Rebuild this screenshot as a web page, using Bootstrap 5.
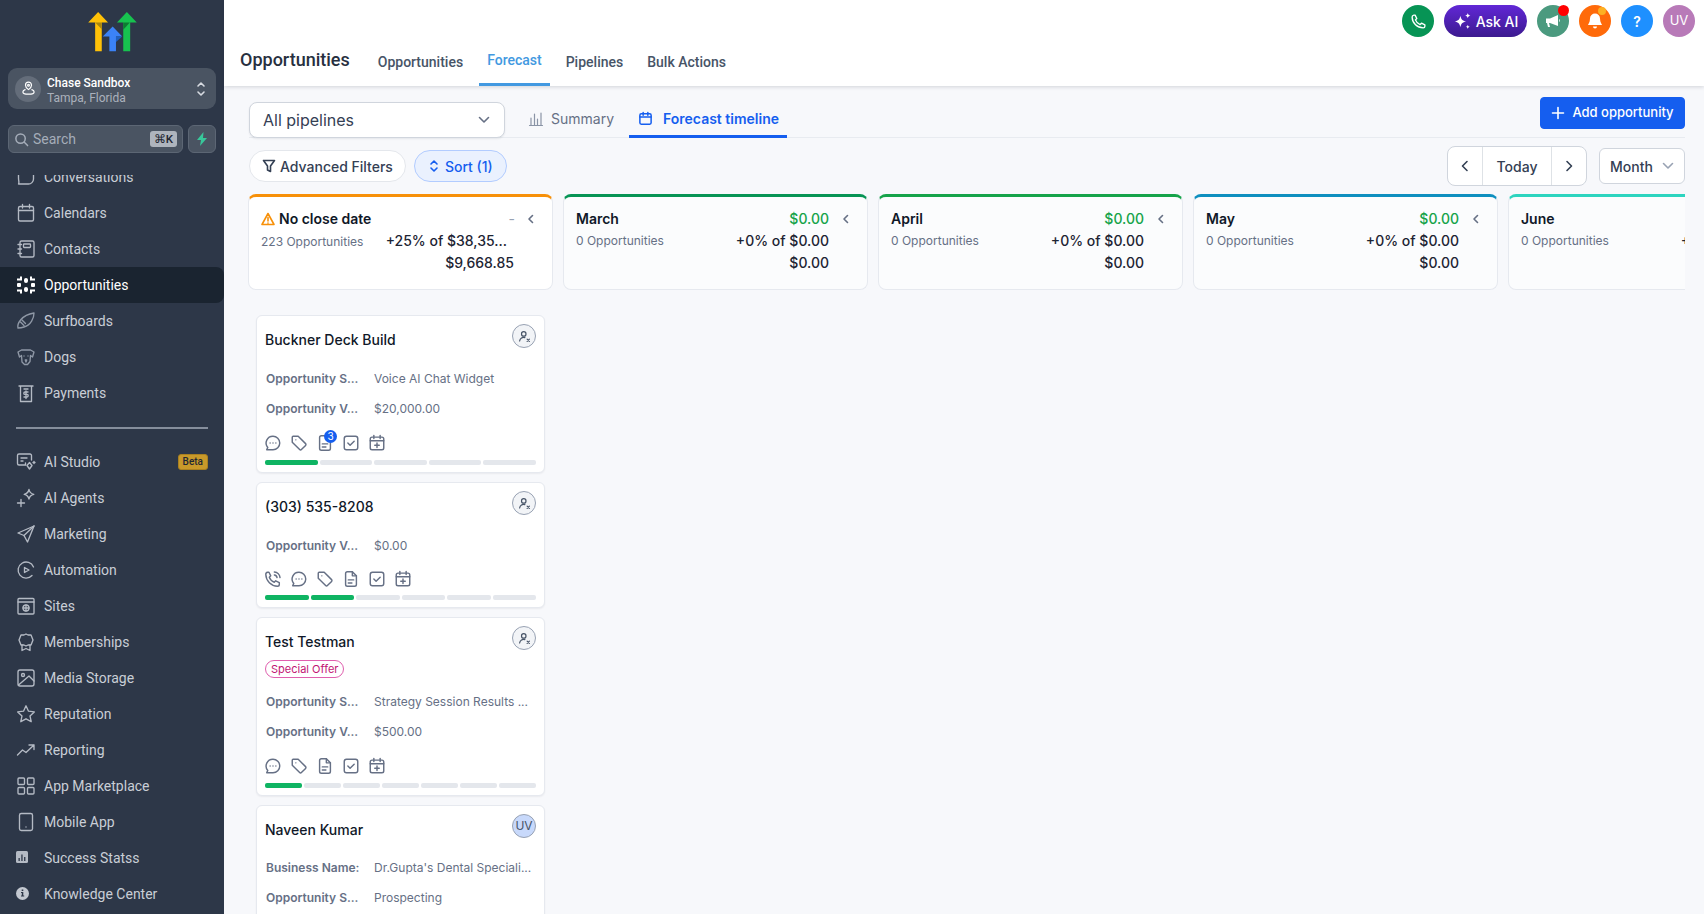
<!DOCTYPE html>
<html lang="en"><head><meta charset="utf-8"><title>Opportunities</title>
<link href="https://cdn.jsdelivr.net/npm/bootstrap@5.3.0/dist/css/bootstrap.min.css" rel="stylesheet">
<style>
html,body{height:100%;overflow:hidden}
body{font-family:Inter,"Liberation Sans",sans-serif;background:#f7f8fb;color:#101828;font-size:14px}
svg{flex:none;display:block}
.ico{fill:none;stroke:currentColor;stroke-width:1.6;stroke-linecap:round;stroke-linejoin:round}
.shell{height:914px}
.side{width:224px;background:#2d3748;font-family:Roboto,sans-serif;color:#c9ced6;flex:none}
.logo-box{height:68px;padding-top:12px;padding-left:88px}
.loc{margin:0 8px;height:41px;background:#4a5462;border-radius:9px;padding:0 10px 0 7px;gap:6px}
.loc-av{width:26px;height:26px;border-radius:50%;background:#646d7a;color:#fff}
.loc-t{padding-top:4px}
.loc-a{font-size:12px;font-weight:500;color:#fff;line-height:15px}
.loc-b{font-size:12px;color:#aab1bc;line-height:15px}
.srch{margin:16px 8px 22px;gap:5px;height:28px}
.srch-in{flex:1;background:#4a5462;border:1px solid #5c6674;border-radius:6px;padding:0 5px;color:#a5adb9;gap:4px}
.kbd-k{background:#aeb4bd;color:#1f2733;font-size:11.5px;font-weight:500;border-radius:3px;width:27px;height:16px;line-height:16px;text-align:center}
.bolt{width:28px;background:#4a5462;border:1px solid #5c6674;border-radius:6px}
.snav{flex:1;overflow:hidden;min-height:0}
.snav-in{margin-top:-16px}
.sitem{height:36px;padding:0 16px 0 16px;gap:8px;font-size:14px;white-space:nowrap}
.sitem svg{width:20px;height:20px;color:#b4bac4}
.sitem .ico{stroke-width:1.35}
.sitem.on{background:#1a2430;border-radius:0 8px 8px 0;color:#fff}
.sitem.on svg{color:#fff}
.sdiv{height:2px;background:#858e9c;margin:16px 16px 15px}
.beta{margin-left:auto;background:#c8992a;color:#1f2733;font-size:10px;font-weight:500;border-radius:3px;padding:0 4px;height:16px;line-height:14px;border:1px solid #a98020}
.main{min-width:0}
.head{height:86px;background:#fff;box-shadow:0 1px 4px rgba(16,24,40,.16);position:relative;font-family:Roboto,sans-serif;flex:none}
.topbar{height:42px;padding:5px 9px 0 0;gap:10px;justify-content:flex-end}
.rnd{width:32px;height:32px;border-radius:50%;color:#fff;position:relative;font-size:14px}
.dotx{position:absolute;border-radius:50%}
.askai{width:83px;height:32px;border-radius:16px;background:linear-gradient(#6127d6,#3c1a8f);color:#fff;font-family:Inter,sans-serif;font-size:14px;font-weight:500;gap:4px}
.tabsrow{height:44px;padding-left:16px}
.ttl{font-size:18px;font-weight:500;color:#27303f;margin-right:16px;padding-bottom:10px}
.htab{height:44px;color:#475467;font-weight:500;font-size:14px;margin:0 4px;display:flex;align-items:center;padding:7px 8px 8px;border-bottom:3px solid transparent}
.htab.on{color:#4299e1;border-bottom-color:#4299e1;padding:7px 8px 12px}
.body-w{padding:0 19px 0 25px;min-height:0}
.r1{height:52px;border-bottom:1px solid #e8ebf0;align-items:flex-end;flex:none}
.sel{width:256px;height:36px;background:#fff;border:1px solid #d0d5dd;border-radius:8px;font-size:16px;color:#344054;padding:0 14px 0 13px;box-shadow:0 1px 2px rgba(16,24,40,.08);margin-bottom:-1px}
.subtab{height:36px;padding:0 7px;color:#667085;gap:7px;margin-bottom:-1px;border-bottom:3px solid transparent}
.subtab.on{color:#155eef;font-weight:600;border-bottom-color:#155eef;padding:0 8px 0 9px;gap:10px;margin-left:8px}
.addb{width:145px;height:32px;background:#155eef;border-color:#155eef;color:#fff;font-size:13px;font-weight:500;border-radius:4px;padding:0;gap:7px;margin-bottom:8px}
.r2{height:56px;padding-top:8px;flex:none}
.pil{height:32px;border-radius:16px;background:#fff;border:1px solid #e4e7ec;color:#344054;font-size:14px;font-weight:500;gap:4px;padding:0 12px;margin-top:4px}
.pil.blu{background:#eaf1fe;border-color:#b2ccff;color:#155eef;margin-left:8px;gap:5px;padding:0 13px}
.tgrp{height:40px;width:140px;background:#fff;border:1px solid #d0d5dd;border-radius:8px;color:#344054}
.tgrp>div{height:100%}
.mth{width:86px;height:36px;background:#fff;border:1px solid #d0d5dd;border-radius:6px;color:#344054;font-weight:500;margin:2px 0 0 12px;gap:9px}
.cols{gap:10px;overflow:hidden;height:96px;flex:none;margin-left:-1px}
.colc{flex:0 0 305px;background:#fff;border:1px solid #e6e9ef;border-top:3px solid;border-radius:8px;padding:13px 16px 0 12px;position:relative}
.colc.dim{background:#fbfcfd}
.cname{font-weight:600;color:#101828;line-height:18px}
.cgreen{color:#16a34a;font-weight:500;line-height:18px}
.csub{font-size:12px;color:#667085}
.camt{font-weight:500;line-height:22px;color:#1d2433;white-space:nowrap}
.cchev{color:#667085;margin:0 1px 0 13px}
.camtrow{margin-top:2px;padding-right:22px}
.camtlast{padding-right:22px}
.lst{width:289px;margin:25px 0 0 7px;gap:9px;flex:none}
.opc{background:#fff;border:1px solid #e6e9ef;border-radius:6px;box-shadow:0 1px 2px rgba(16,24,40,.06);padding:7px 8px 0;flex:none}
.oh{height:32px;position:relative;padding-top:8px}
.ot{font-size:14px;font-weight:500;color:#101828;line-height:18px}
.oav{width:24px;height:24px;border-radius:50%;background:#f2f4f7;border:1px solid #98a2b3;color:#475467;position:absolute;right:0;top:1px;font-size:12px}
.oav.usr{background:#c8d9fb}
.orow{height:30px;font-size:12px;color:#667085;white-space:nowrap}
.ol{width:109px;font-weight:600;padding-left:1px;color:#667085}
.oicons{height:26px;gap:8px;color:#667085;margin:6px 0 0 -1px}
.oicons svg{width:18px;height:18px}
.nb{position:absolute;top:-4px;left:8px;width:13px;height:13px;border-radius:50%;background:#155eef;color:#fff;font-size:10px;line-height:13px;text-align:center}
.bars{gap:2px;height:5px;margin:4px 0 7px}
.bars i{flex:1;background:#e4e7ec;border-radius:2px;display:block}
.bars i.g{background:#0fb463}
.spc{display:inline-block;height:18px;line-height:16px;border:1px solid #e05fae;color:#c11574;font-size:11px;border-radius:9px;padding:0 5px}
.tailpad{height:40px}
</style></head>
<body>
<svg width="0" height="0" style="position:absolute">
<defs>
<symbol id="i-chat" viewBox="0 0 20 20"><path d="M10 2.500a7.500 7.500 0 0 1 0 15H3l1.200-2.600A7.500 7.500 0 0 1 10 2.500z"/><path d="M6.800 10h.01M10 10h.01M13.200 10h.01"/></symbol>
<symbol id="i-tag" viewBox="0 0 20 20"><path d="M2.500 3.500a1 1 0 0 1 1-1h5.600l8.200 8.200a1.400 1.400 0 0 1 0 2l-4.600 4.600a1.400 1.400 0 0 1-2 0L2.500 9.100z"/><path d="M6.500 6.500h.01"/></symbol>
<symbol id="i-doc" viewBox="0 0 20 20"><path d="M11.500 2H6a2 2 0 0 0-2 2v12a2 2 0 0 0 2 2h8a2 2 0 0 0 2-2V6.500z"/><path d="M11.500 2v4.500H16M7 11h6M7 14.500h4"/></symbol>
<symbol id="i-chk" viewBox="0 0 20 20"><rect x="2.500" y="2.500" width="15" height="15" rx="2.500"/><path d="M6.500 10l2.500 2.500 4.500-4.500"/></symbol>
<symbol id="i-cal" viewBox="0 0 20 20"><rect x="2.500" y="3.500" width="15" height="14" rx="2"/><path d="M2.500 7.500h15M6.500 1.500v3.500M13.500 1.500v3.500M10 10v5M7.500 12.500h5"/></symbol>
<symbol id="i-call" viewBox="0 0 20 20"><path d="M5.500 2.500l2 4-1.600 1.600a9 9 0 0 0 5.500 5.500l1.600-1.600 4 2v2a2 2 0 0 1-2 2A13.500 13.500 0 0 1 2 5a2.400 2.400 0 0 1 2-2.500z"/><path d="M11.500 5.500a3.500 3.500 0 0 1 3 3M11.500 2.200a6.800 6.800 0 0 1 6.300 6.300"/></symbol>
<symbol id="i-nouser" viewBox="0 0 20 20"><circle cx="9" cy="6.500" r="3"/><path d="M3.500 16a5.500 5.500 0 0 1 7-4.500M13.500 13.500l3 3M16.500 13.500l-3 3"/></symbol>
</defs></svg>
<div class="d-flex shell">
<aside class="side d-flex flex-column">
  <div class="logo-box">
    <svg width="49" height="40" viewBox="263 36 147 121"><path fill="#ffc107" d="M284 155V68h-21l30-32 30 32h-19v87z"/><path fill="#a8860f" d="M284 68h20l0 20z"/><path fill="#3b82f6" d="M327 155v-45h-20l30-30 29 30h-19v45z"/><path fill="#1e5fc0" d="M347 110h19l-19 17z"/><path fill="#17c24f" d="M369 155V68h-19l30-32 30 32h-20v87z"/><path fill="#0e7a32" d="M369 68h20l-20 22z"/></svg>
  </div>
  <div class="loc d-flex align-items-center">
    <div class="loc-av d-flex align-items-center justify-content-center"><svg class="ico" width="15" height="15" viewBox="0 0 20 20"><path d="M10 11.500s4-3 4-6a4 4 0 0 0-8 0c0 3 4 6 4 6z"/><circle cx="10" cy="5.500" r="1.200"/><path d="M5.500 11.500C3.500 12.300 2.500 13.300 2.500 14.500c0 2 3.400 3 7.500 3s7.500-1 7.500-3c0-1.200-1-2.200-3-3"/></svg></div>
    <div class="loc-t flex-grow-1"><div class="loc-a">Chase Sandbox</div><div class="loc-b">Tampa, Florida</div></div>
    <svg class="ico" width="10" height="18" viewBox="0 0 10 18" style="color:#d7dbe1"><path d="M2 6l3-3 3 3M2 12l3 3 3-3"/></svg>
  </div>
  <div class="srch d-flex">
    <div class="srch-in d-flex align-items-center">
      <svg class="ico" width="15" height="15" viewBox="0 0 16 16"><circle cx="7" cy="7" r="5"/><path d="M11 11l3.500 3.500"/></svg>
      <span class="flex-grow-1">Search</span><span class="kbd-k">⌘K</span>
    </div>
    <div class="bolt d-flex align-items-center justify-content-center"><svg width="12" height="14" viewBox="0 0 12 14"><path fill="#38c79a" d="M7.500 0L1 8h4l-1 6 7-8H7z"/></svg></div>
  </div>
  <nav class="snav"><div class="snav-in">
    <div class="sitem d-flex align-items-center"><svg class="ico" viewBox="0 0 20 20"><path d="M2.500 3v8c0 3 1 4.500 0 6h10c2.500 0 5-2 5-5V3"/></svg>Conversations</div>
    <div class="sitem d-flex align-items-center"><svg class="ico" viewBox="0 0 20 20"><rect x="2.500" y="3.500" width="15" height="14.500" rx="1.500"/><path d="M2.500 7.500h15M6.500 1.500v3.500M13.500 1.500v3.500"/></svg>Calendars</div>
    <div class="sitem d-flex align-items-center"><svg class="ico" viewBox="0 0 20 20"><rect x="4" y="2" width="14" height="16" rx="1.500"/><rect x="7.500" y="5" width="7" height="3.500" rx=".8"/><path d="M2 5.500h3.500M2 10h3.500M2 14.500h3.500"/></svg>Contacts</div>
    <div class="sitem on d-flex align-items-center"><svg viewBox="0 0 20 20" fill="#fff"><path d="M1 3.500h3v-2h2v4H1zM14 1.500h2v2h3v2h-5zM1 14.500h5v4H4v-2H1zM14 14.500h5v2h-3v2h-2z"/><rect x="8" y="3" width="4" height="5" rx="2"/><rect x="8" y="12" width="4" height="5" rx="2"/><rect x="1" y="8" width="4" height="4" rx="1"/><rect x="15" y="8" width="4" height="4" rx="1"/></svg>Opportunities</div>
    <div class="sitem d-flex align-items-center"><svg class="ico" viewBox="0 0 20 20" style="color:#8f98a6"><path d="M2 17c-1-4 3-13 16-15 0 5-3 12-10 14-3 1-5 1-6 1z"/><path d="M6 9l3.500 3.500M4.500 11l3.500 3.500"/></svg>Surfboards</div>
    <div class="sitem d-flex align-items-center"><svg class="ico" viewBox="0 0 20 20" style="color:#8f98a6"><path d="M5.500 3h9l3.500 2-1.500 5-2-1.500-.5 6-2.500 3h-3L6 15l-.5-6.500L3.500 10 2 5z"/><path d="M8 9h.01M12 9h.01M9.300 13h1.400l-.7 2z"/></svg>Dogs</div>
    <div class="sitem d-flex align-items-center"><svg class="ico" viewBox="0 0 20 20"><path d="M3 3h14M4.500 3v15.500h11V3M8 6h4"/><path d="M12 9H9c-.8 0-1.200.6-1.200 1.200s.4 1.200 1.200 1.200h2c.8 0 1.200.6 1.200 1.200S11.800 14 11 14H8M10 8v7.500"/></svg>Payments</div>
    <div class="sdiv"></div>
    <div class="sitem d-flex align-items-center"><svg class="ico" viewBox="0 0 20 20"><path d="M9 13H3a1.500 1.500 0 0 1-1.500-1.500v-8A1.500 1.500 0 0 1 3 2h11a1.500 1.500 0 0 1 1.500 1.500V8M5 6h6M5 9h2"/><path d="M13.500 10.500l2.500 3-2.500 3.500-2.500-3.500zM18 9.500v2M17 10.500h2M9.500 11v2"/></svg><span>AI Studio</span><span class="beta">Beta</span></div>
    <div class="sitem d-flex align-items-center"><svg class="ico" viewBox="0 0 20 20"><path d="M13 1.500c.5 2.800 1.700 4 4.800 4.800-3.100.7-4.300 2-4.800 4.700-.6-2.700-1.700-4-4.800-4.700 3.100-.8 4.200-2 4.800-4.800z"/><path d="M5 11.500v7M1.500 15h7"/></svg>AI Agents</div>
    <div class="sitem d-flex align-items-center"><svg class="ico" viewBox="0 0 20 20"><path d="M18 2L2 9l6 2.500L11.500 18z"/><path d="M8 11.500L18 2"/></svg>Marketing</div>
    <div class="sitem d-flex align-items-center"><svg class="ico" viewBox="0 0 20 20"><path d="M17.500 7A8 8 0 1 0 16 15.500"/><path d="M8.500 7.500l4.500 2.500-4.500 2.500z"/></svg>Automation</div>
    <div class="sitem d-flex align-items-center"><svg class="ico" viewBox="0 0 20 20"><rect x="2" y="2.500" width="16" height="15.500" rx="1"/><path d="M2 6h16"/><circle cx="10" cy="12" r="3"/><path d="M7 12h6M10 9v6"/></svg>Sites</div>
    <div class="sitem d-flex align-items-center"><svg class="ico" viewBox="0 0 20 20"><path d="M10 2l2 1h3l1 2.500 1 2.500-1 2.500-1 2.500h-3l-2 1-2-1H5l-1-2.500L3 8l1-2.500L5 3h3z"/><path d="M6 13v5.500l4-2 4 2V13"/></svg>Memberships</div>
    <div class="sitem d-flex align-items-center"><svg class="ico" viewBox="0 0 20 20"><rect x="2" y="2" width="16" height="16" rx="2"/><circle cx="7" cy="7" r="1.500"/><path d="M2.500 17L13 8l5 5"/></svg>Media Storage</div>
    <div class="sitem d-flex align-items-center"><svg class="ico" viewBox="0 0 20 20"><path d="M10 1.800l2.500 5.400 5.800.7-4.300 4 1.200 5.800-5.200-2.900-5.200 2.900L6 11.900l-4.300-4 5.800-.7z"/></svg>Reputation</div>
    <div class="sitem d-flex align-items-center"><svg class="ico" viewBox="0 0 20 20"><path d="M1.500 15l5-5 3.500 2.500 8-7.500M13 5h5v4.500"/></svg>Reporting</div>
    <div class="sitem d-flex align-items-center"><svg class="ico" viewBox="0 0 20 20"><rect x="2" y="2" width="6.500" height="6.500" rx="1"/><rect x="11.500" y="2" width="6.500" height="6.500" rx="1"/><rect x="2" y="11.500" width="6.500" height="6.500" rx="1"/><rect x="11.500" y="11.500" width="6.500" height="6.500" rx="1"/></svg>App Marketplace</div>
    <div class="sitem d-flex align-items-center"><svg class="ico" viewBox="0 0 20 20"><rect x="3.500" y="1.500" width="13" height="17" rx="1.800"/><path d="M10 15h.01"/></svg>Mobile App</div>
    <div class="sitem d-flex align-items-center"><svg viewBox="0 0 20 20" fill="#b4bac4" style="margin-left:-1px;margin-right:1px"><rect x="1" y="3" width="12" height="12" rx="1.500"/><path fill="#2d3748" d="M3.500 10h1.300v3H3.500zM6.300 6.500h1.300V13H6.300zM9.100 9h1.300v4H9.100z"/></svg>Success Statss</div>
    <div class="sitem d-flex align-items-center"><svg viewBox="0 0 20 20" fill="#c3c8d0" style="margin-left:-1px;margin-right:1px"><circle cx="7.500" cy="9.500" r="6.500"/><path fill="#2d3748" d="M6.700 5.500h1.600V7H6.700zM6 8h2.300v3.500H9.200v1H6v-1h.8V9H6z"/></svg>Knowledge Center</div>
  </div></nav>
</aside>

<div class="main flex-grow-1 d-flex flex-column">
  <header class="head">
    <div class="topbar d-flex">
      <div class="rnd d-flex align-items-center justify-content-center" style="background:#079455"><svg class="ico" width="17" height="17" viewBox="0 0 20 20"><path d="M6 2.500l2 4-1.600 1.600a9 9 0 0 0 5.500 5.500l1.600-1.600 4 2v1.500a2 2 0 0 1-2 2A13 13 0 0 1 2.500 5 2.400 2.400 0 0 1 4.500 2.500z"/></svg></div>
      <div class="askai d-flex align-items-center justify-content-center"><svg width="19" height="19" viewBox="0 0 18 18" fill="#fff"><path d="M7 3.500c.7 3.500 1.800 4.800 5.500 5.500-3.700.7-4.800 2-5.500 5.500C6.300 11 5.200 9.700 1.500 9 5.200 8.300 6.300 7 7 3.500zM14 1c.3 1.600.9 2.200 2.500 2.500C14.900 3.800 14.300 4.400 14 6c-.3-1.600-.9-2.200-2.500-2.500C13.100 3.200 13.700 2.600 14 1zM14 12c.3 1.300.7 1.700 2 2-1.300.3-1.700.7-2 2-.3-1.300-.7-1.700-2-2 1.300-.3 1.700-.7 2-2z"/></svg>Ask AI</div>
      <div class="rnd d-flex align-items-center justify-content-center" style="background:#4b9a7f"><svg width="18" height="18" viewBox="0 0 18 18" fill="#fff"><path d="M2 6.500h4L14 3v11L6 11H5l1 4H4l-1-4H2z"/><path d="M15 7c1 .4 1 2.600 0 3z"/></svg><span class="dotx" style="width:11px;height:11px;background:#f00;top:0;right:0"></span></div>
      <div class="rnd d-flex align-items-center justify-content-center" style="background:#ff6a0a"><svg width="18" height="18" viewBox="0 0 18 18" fill="#fff"><path d="M9 1.500a5 5 0 0 0-5 5c0 4-2 6-2 6.500h14c0-.5-2-2.500-2-6.500a5 5 0 0 0-5-5zM7 14.500h4a2 2 0 0 1-4 0z"/></svg><span class="dotx" style="width:8px;height:8px;background:#fdb022;top:2px;right:5px"></span></div>
      <div class="rnd d-flex align-items-center justify-content-center fw-semibold" style="background:#1e90ff;font-family:Inter,sans-serif">?</div>
      <div class="rnd d-flex align-items-center justify-content-center" style="background:#b87ab8;font-family:Inter,sans-serif;font-size:13px">UV</div>
    </div>
    <div class="tabsrow d-flex align-items-center">
      <div class="ttl">Opportunities</div>
      <div class="htab">Opportunities</div>
      <div class="htab on">Forecast</div>
      <div class="htab">Pipelines</div>
      <div class="htab">Bulk Actions</div>
    </div>
  </header>
  <div class="body-w flex-grow-1 d-flex flex-column overflow-hidden">
    <div class="r1 d-flex">
      <div class="sel d-flex align-items-center justify-content-between me-3"><span>All pipelines</span><svg class="ico" width="12" height="8" viewBox="0 0 12 8" style="color:#667085"><path d="M1.500 1.500L6 6l4.500-4.500"/></svg></div>
      <div class="subtab d-flex align-items-center"><svg class="ico" width="16" height="16" viewBox="0 0 16 16" style="color:#8a94a6"><path d="M1.500 14.500h13M3 14V7M6.500 14V3M9.500 14V8M13 14V2" stroke-width="1.200"/></svg>Summary</div>
      <div class="subtab on d-flex align-items-center"><svg class="ico" width="15" height="15" viewBox="0 0 16 16"><rect x="2" y="3" width="12" height="11" rx="1.500"/><path d="M2 6.500h12M5.500 1.500v3M10.500 1.500v3"/></svg>Forecast timeline</div>
      <button class="btn addb ms-auto d-flex align-items-center justify-content-center"><svg class="ico" width="14" height="14" viewBox="0 0 14 14"><path d="M7 1.500v11M1.500 7h11"/></svg>Add opportunity</button>
    </div>
    <div class="r2 d-flex">
      <div class="pil d-flex align-items-center"><svg class="ico" width="14" height="14" viewBox="0 0 14 14" style="color:#344054"><path d="M1.500 1.500h11L8.500 7v5.500l-3-1.500V7z"/></svg>Advanced Filters</div>
      <div class="pil blu d-flex align-items-center"><svg class="ico" width="12" height="14" viewBox="0 0 12 14" stroke-width="2"><path d="M3 5l3-3 3 3M3 9l3 3 3-3"/></svg>Sort (1)</div>
      <div class="tgrp d-flex ms-auto">
        <div class="d-flex align-items-center justify-content-center border-end" style="width:35px"><svg class="ico" width="8" height="12" viewBox="0 0 8 12"><path d="M6 1.500L1.500 6 6 10.500"/></svg></div>
        <div class="d-flex align-items-center justify-content-center fw-medium border-end" style="width:69px">Today</div>
        <div class="d-flex align-items-center justify-content-center flex-grow-1"><svg class="ico" width="8" height="12" viewBox="0 0 8 12"><path d="M2 1.500L6.500 6 2 10.500"/></svg></div>
      </div>
      <div class="mth d-flex align-items-center justify-content-center"><span>Month</span><svg class="ico" width="12" height="8" viewBox="0 0 12 8" style="color:#98a2b3"><path d="M1.500 1.500L6 6l4.500-4.500"/></svg></div>
    </div>
    <div class="cols d-flex">
      <div class="colc" style="border-top-color:#f79009">
        <div class="d-flex align-items-center"><svg class="ico" width="14" height="14" viewBox="0 0 14 14" style="color:#f79009;margin-right:4px"><path d="M7 1.500L1 12.500h12zM7 5.500v3.500M7 11h.01"/></svg><span class="cname flex-grow-1">No close date</span><span style="color:#98a2b3;margin-right:12px;line-height:18px">-</span><svg class="ico" style="color:#667085;margin-right:1px" width="8" height="10" viewBox="0 0 8 10"><path d="M5.500 1.500L2 5l3.500 3.500"/></svg></div>
        <div class="d-flex justify-content-between" style="margin-top:2px;padding-right:29px"><span class="csub" style="margin-top:3px">223 Opportunities</span><span class="camt">+25% of $38,35...</span></div>
        <div class="text-end camt camtlast">$9,668.85</div>
      </div>
      <div class="colc dim" style="border-top-color:#079455">
        <div class="d-flex align-items-center"><span class="cname flex-grow-1">March</span><span class="cgreen">$0.00</span><svg class="ico cchev" width="8" height="10" viewBox="0 0 8 10"><path d="M5.500 1.500L2 5l3.500 3.500"/></svg></div>
        <div class="d-flex justify-content-between camtrow"><span class="csub" style="margin-top:2px">0 Opportunities</span><span class="camt">+0% of $0.00</span></div>
        <div class="text-end camt camtlast">$0.00</div>
      </div>
      <div class="colc dim" style="border-top-color:#16a34a">
        <div class="d-flex align-items-center"><span class="cname flex-grow-1">April</span><span class="cgreen">$0.00</span><svg class="ico cchev" width="8" height="10" viewBox="0 0 8 10"><path d="M5.500 1.500L2 5l3.500 3.500"/></svg></div>
        <div class="d-flex justify-content-between camtrow"><span class="csub" style="margin-top:2px">0 Opportunities</span><span class="camt">+0% of $0.00</span></div>
        <div class="text-end camt camtlast">$0.00</div>
      </div>
      <div class="colc dim" style="border-top-color:#0e8fbf">
        <div class="d-flex align-items-center"><span class="cname flex-grow-1">May</span><span class="cgreen">$0.00</span><svg class="ico cchev" width="8" height="10" viewBox="0 0 8 10"><path d="M5.500 1.500L2 5l3.500 3.500"/></svg></div>
        <div class="d-flex justify-content-between camtrow"><span class="csub" style="margin-top:2px">0 Opportunities</span><span class="camt">+0% of $0.00</span></div>
        <div class="text-end camt camtlast">$0.00</div>
      </div>
      <div class="colc dim" style="border-top-color:#2dd4bf">
        <div class="d-flex align-items-center"><span class="cname flex-grow-1">June</span><span class="cgreen">$0.00</span><svg class="ico cchev" width="8" height="10" viewBox="0 0 8 10"><path d="M5.500 1.500L2 5l3.500 3.500"/></svg></div>
        <div class="d-flex justify-content-between camtrow"><span class="csub" style="margin-top:2px">0 Opportunities</span><span class="camt">+0% of $0.00</span></div>
        <div class="text-end camt camtlast">$0.00</div>
      </div>
    </div>
    <div class="lst d-flex flex-column">
      <div class="opc">
        <div class="oh"><div class="ot">Buckner Deck Build</div><div class="oav d-flex align-items-center justify-content-center"><svg class="ico" width="15" height="15" viewBox="0 0 20 20"><use href="#i-nouser"/></svg></div></div>
        <div style="height:9px"></div>
        <div class="orow d-flex align-items-center"><span class="ol">Opportunity S...</span><span>Voice AI Chat Widget</span></div>
        <div class="orow d-flex align-items-center"><span class="ol">Opportunity V...</span><span>$20,000.00</span></div>
        <div class="oicons d-flex align-items-center">
          <svg class="ico"><use href="#i-chat"/></svg><svg class="ico"><use href="#i-tag"/></svg>
          <span class="position-relative"><svg class="ico"><use href="#i-doc"/></svg><span class="nb">3</span></span>
          <svg class="ico"><use href="#i-chk"/></svg><svg class="ico"><use href="#i-cal"/></svg>
        </div>
        <div class="bars d-flex"><i class="g"></i><i></i><i></i><i></i><i></i></div>
      </div>
      <div class="opc">
        <div class="oh"><div class="ot">(303) 535-8208</div><div class="oav d-flex align-items-center justify-content-center"><svg class="ico" width="15" height="15" viewBox="0 0 20 20"><use href="#i-nouser"/></svg></div></div>
        <div style="height:9px"></div>
        <div class="orow d-flex align-items-center"><span class="ol">Opportunity V...</span><span>$0.00</span></div>
        <div class="oicons d-flex align-items-center" style="height:24px">
          <svg class="ico"><use href="#i-call"/></svg><svg class="ico"><use href="#i-chat"/></svg><svg class="ico"><use href="#i-tag"/></svg><svg class="ico"><use href="#i-doc"/></svg><svg class="ico"><use href="#i-chk"/></svg><svg class="ico"><use href="#i-cal"/></svg>
        </div>
        <div class="bars d-flex"><i class="g"></i><i class="g"></i><i></i><i></i><i></i><i></i></div>
      </div>
      <div class="opc">
        <div class="oh"><div class="ot">Test Testman</div><div class="oav d-flex align-items-center justify-content-center"><svg class="ico" width="15" height="15" viewBox="0 0 20 20"><use href="#i-nouser"/></svg></div></div>
        <div style="height:20px"><span class="spc">Special Offer</span></div>
        <div style="height:10px"></div>
        <div class="orow d-flex align-items-center"><span class="ol">Opportunity S...</span><span>Strategy Session Results ...</span></div>
        <div class="orow d-flex align-items-center"><span class="ol">Opportunity V...</span><span>$500.00</span></div>
        <div class="oicons d-flex align-items-center">
          <svg class="ico"><use href="#i-chat"/></svg><svg class="ico"><use href="#i-tag"/></svg><svg class="ico"><use href="#i-doc"/></svg><svg class="ico"><use href="#i-chk"/></svg><svg class="ico"><use href="#i-cal"/></svg>
        </div>
        <div class="bars d-flex"><i class="g"></i><i></i><i></i><i></i><i></i><i></i><i></i></div>
      </div>
      <div class="opc">
        <div class="oh"><div class="ot">Naveen Kumar</div><div class="oav usr d-flex align-items-center justify-content-center">UV</div></div>
        <div style="height:8px"></div>
        <div class="orow d-flex align-items-center"><span class="ol">Business Name:</span><span>Dr.Gupta's Dental Speciali...</span></div>
        <div class="orow d-flex align-items-center"><span class="ol">Opportunity S...</span><span>Prospecting</span></div>
        <div class="tailpad"></div>
      </div>
    </div>
  </div>
</div>
</div>
</body></html>
